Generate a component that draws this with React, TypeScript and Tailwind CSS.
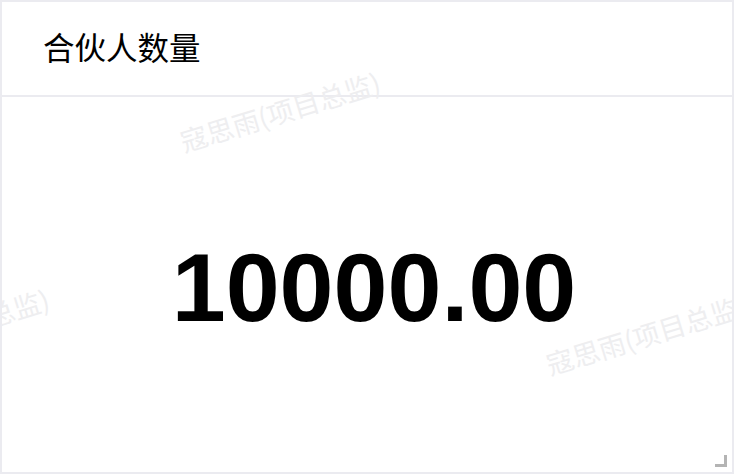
const WATERMARKS = [
  { left: 179, top: 126 },
  { left: 545, top: 349 },
  { left: -152, top: 343 },
];

function Watermark({ left, top }: { left: number; top: number }) {
  return (
    <span
      className="absolute whitespace-nowrap text-[27px] leading-[27px] text-[#eeeef0] origin-left -rotate-[17deg] select-none pointer-events-none"
      style={{ left, top, fontFamily: '"Noto Sans CJK SC", "Noto Sans", sans-serif' }}
    >
      寇思雨(项目总监)
    </span>
  );
}

export default function App() {
  return (
    <div className="w-[734px] h-[474px] bg-white">
      <div className="relative w-full h-full flex flex-col border-2 border-[#ebebf0] overflow-hidden">
        <div className="h-[95px] flex-none flex items-center pl-[41px] border-b-2 border-[#ebebf0]">
          <h1
            className="text-[31.5px] leading-none text-black pb-[3px]"
            style={{ fontFamily: '"Noto Sans CJK SC", "Noto Sans", sans-serif' }}
          >
            合伙人数量
          </h1>
        </div>
        <div className="flex-1 flex items-center justify-center pl-[14px] pt-[6px]">
          <span
            className="text-[97px] leading-none font-bold text-black"
            style={{ fontFamily: '"Liberation Sans", Arial, sans-serif' }}
          >
            10000.00
          </span>
        </div>
        {WATERMARKS.map((w, i) => (
          <Watermark key={i} left={w.left} top={w.top} />
        ))}
        <div className="absolute right-[5px] bottom-[5px] w-[12px] h-[12px] border-r-[3px] border-b-[3px] border-[#b4b4b4]" />
      </div>
    </div>
  );
}
